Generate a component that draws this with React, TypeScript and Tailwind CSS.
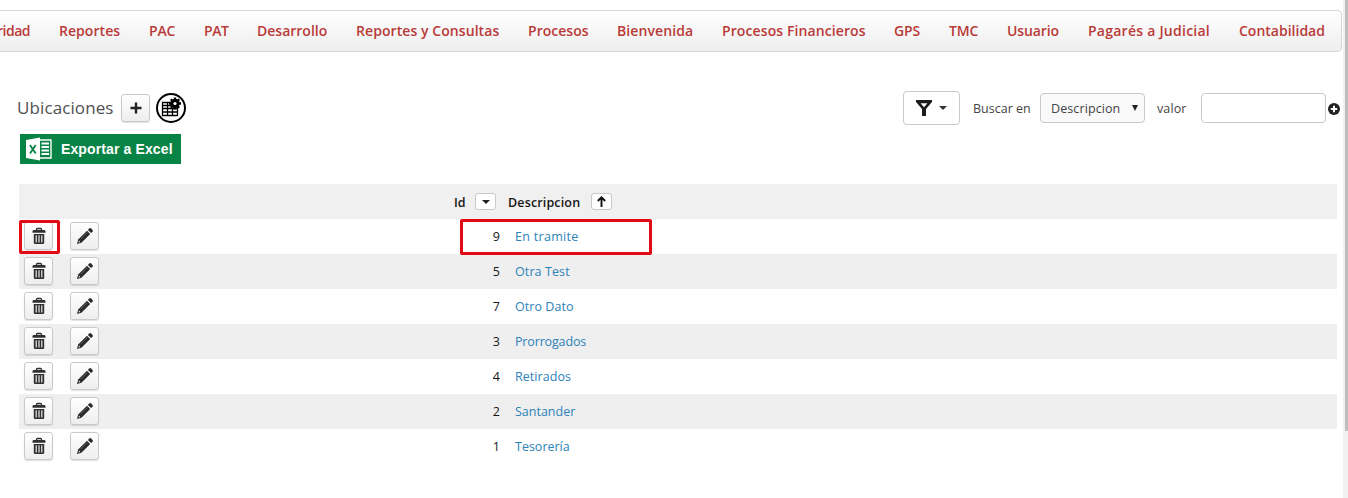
import React from "react";

const navItems = [
  { label: "Seguridad", style: "w-[69px] justify-end tracking-[-0.5px]" },
  { label: "Reportes", style: "w-[61px] tracking-[0.05px]" },
  { label: "PAC", style: "w-[26px] tracking-[-0.2px]" },
  { label: "PAT", style: "w-[24px] tracking-[-0.4px]" },
  { label: "Desarrollo", style: "w-[70px] tracking-[0px]" },
  { label: "Reportes y Consultas", style: "w-[143px] tracking-[0.07px]" },
  { label: "Procesos", style: "w-[60px] tracking-[0.02px]" },
  { label: "Bienvenida", style: "w-[76px] tracking-[0.1px]" },
  { label: "Procesos Financieros", style: "w-[143px] tracking-[0.1px]" },
  { label: "GPS", style: "w-[26px] tracking-[-0.1px]" },
  { label: "TMC", style: "w-[29px] tracking-[-0.1px]" },
  { label: "Usuario", style: "w-[52px] tracking-[-0.1px]" },
  { label: "Pagarés a Judicial", style: "w-[122px] tracking-[0.25px]" },
  { label: "Contabilidad", style: "w-[86px] tracking-[0px]" },
];

const rows = [
  { id: 9, name: "En tramite", tracking: "tracking-[0.3px]", marked: true },
  { id: 5, name: "Otra Test", tracking: "tracking-[0.1px]" },
  { id: 7, name: "Otro Dato", tracking: "tracking-[0.05px]" },
  { id: 3, name: "Prorrogados", tracking: "tracking-[-0.15px]" },
  { id: 4, name: "Retirados", tracking: "tracking-[0.05px]" },
  { id: 2, name: "Santander", tracking: "tracking-[0px]" },
  { id: 1, name: "Tesorería", tracking: "tracking-[0px]" },
];

function TrashIcon() {
  return (
    <svg width="14" height="18" viewBox="0 0 14 18" fill="none">
      <path d="M4.5 3.2V2.4q0-.9.9-.9h3.2q.9 0 .9.9v.8" stroke="#303030" strokeWidth="1.3" />
      <path d="M.5 5.8V4.4Q.5 3 2 3h10q1.5 0 1.5 1.4v1.4z" fill="#303030" />
      <path d="M1.8 7h10.4v8.7q0 1.3-1.3 1.3H3.1q-1.3 0-1.3-1.3z" fill="#303030" />
      <path d="M4.2 8.2v7.3M7 8.2v7.3M9.8 8.2v7.3" stroke="#e8e8e8" strokeWidth="1.2" />
    </svg>
  );
}

function PencilIcon() {
  return (
    <svg width="18" height="18" viewBox="0 0 18 18" fill="#292929">
      <path d="M1 17l1.2-4.4 8.8-8.8 3.2 3.2-8.8 8.8z" />
      <path d="M11.9 2.9l1.4-1.4a1.3 1.3 0 0 1 1.8 0l1.4 1.4a1.3 1.3 0 0 1 0 1.8l-1.4 1.4z" />
      <path d="M3 13.6l1.4 1.4-1.8.6z" fill="#f6f6f6" />
      <path d="M4.5 12.3l6.9-6.9" stroke="#777" strokeWidth=".7" />
    </svg>
  );
}

function IconButton({ children }: { children: React.ReactNode }) {
  return (
    <button className="flex h-[28px] w-[29px] shrink-0 items-center justify-center rounded-[3px] border border-[#c9c9c9] bg-linear-to-b from-white to-[#eeeeee] shadow-[0_1px_1px_rgba(0,0,0,0.12)]">
      {children}
    </button>
  );
}

function TableSettingsIcon() {
  return (
    <svg className="ml-[5px]" width="32" height="32" viewBox="0 0 32 32">
      <circle cx="16" cy="16" r="14" fill="white" stroke="black" strokeWidth="2" />
      <path d="M7.5 10.5h15v13h-15zM7.5 13.5h15M7.5 16.5h15M7.5 20h15M12.5 10.5v13M17.5 16v7.5" fill="none" stroke="black" strokeWidth="1.3" />
      <circle cx="20" cy="11.5" r="4.7" fill="black" />
      <path d="M20 5.5v12M14 11.5h12M15.8 7.3l8.4 8.4M24.2 7.3l-8.4 8.4" stroke="black" strokeWidth="2.3" />
      <circle cx="20" cy="11.5" r="1.6" fill="white" />
    </svg>
  );
}

function ExcelIcon() {
  return (
    <svg width="27" height="24" viewBox="0 0 27 24">
      <path d="M13 3h12v18H13z" fill="#078345" stroke="white" strokeWidth="1.4" />
      <path d="M15.5 6.5h7.5M15.5 10h7.5M15.5 13.5h7.5M15.5 17h7.5" stroke="white" strokeWidth="2" />
      <path d="M0 3L14 .5v23L0 21z" fill="white" />
      <path d="M4 8l5.7 8.5M9.7 8L4 16.5" stroke="#078345" strokeWidth="1.8" />
    </svg>
  );
}

export default function App() {
  return (
    <div className="flex h-[498px] w-[1348px] overflow-hidden bg-white font-['Open_Sans','Noto_Sans',sans-serif] text-[12.5px] text-[#444]">
      <div className="flex w-[1343px] shrink-0 flex-col pt-[10px]">
        <nav className="flex h-[42px] w-[1342px] items-center justify-end gap-[29px] overflow-hidden rounded-r-[5px] border border-l-0 border-[#d5d5d5] bg-linear-to-b from-white to-[#eeeeee] pb-[2px] pr-[16px] text-[14px] font-semibold text-[#b93b39]">
          {navItems.map((item) => (
            <a key={item.label} className={"flex shrink-0 whitespace-nowrap " + item.style}>
              {item.label}
            </a>
          ))}
        </nav>

        <header className="mt-[39px] flex h-[34px] items-center pl-[17px]">
          <h1 className="w-[104px] whitespace-nowrap text-[17px] font-medium tracking-[0.1px] text-[#505050]">Ubicaciones</h1>
          <IconButton>
            <svg width="12" height="12" viewBox="0 0 12 12">
              <path d="M6 .5v11M.5 6h11" stroke="#222" strokeWidth="2.4" />
            </svg>
          </IconButton>
          <TableSettingsIcon />

          <div className="ml-auto flex items-center">
            <button className="flex h-[34px] w-[57px] items-center justify-center gap-[7px] rounded-[4px] border border-[#c9c9c9]">
              <svg width="16" height="16" viewBox="0 0 16 16">
                <path fillRule="evenodd" d="M0 0h16v2L10 9v7H6V9L0 2zM4.6 3.2L8 7.2l3.4-4z" fill="#1d1d1d" />
              </svg>
              <svg width="8" height="4" viewBox="0 0 8 4">
                <path d="M0 0h8L4 4z" fill="#333" />
              </svg>
            </button>
            <span className="ml-[13px] w-[67px] whitespace-nowrap pt-[2px]">Buscar en</span>
            <button className="flex h-[30px] w-[105px] items-center justify-between rounded-[4px] border border-[#c9c9c9] bg-[#f9f9f9] pl-[10px] pr-[6px]">
              <span className="pt-[2px] tracking-[0.1px]">Descripcion</span>
              <svg width="6" height="6" viewBox="0 0 6 6">
                <path d="M0 0h6L3 6z" fill="#222" />
              </svg>
            </button>
            <span className="ml-[12px] w-[44px] pt-[2px] tracking-[0.1px]">valor</span>
            <input aria-label="valor" className="h-[30px] w-[125px] rounded-[4px] border border-[#c9c9c9] bg-white" />
            <svg className="ml-[2px] mr-[3px] mt-[2px]" width="12" height="12" viewBox="0 0 12 12">
              <circle cx="6" cy="6" r="6" fill="#222" />
              <path d="M6 2.8v6.4M2.8 6h6.4" stroke="white" strokeWidth="2" />
            </svg>
          </div>
        </header>

        <button className="ml-[20px] mt-[9px] flex h-[30px] w-[161px] items-center bg-[#078345] pl-[6px] font-['Liberation_Sans',sans-serif] text-[14px] font-bold text-white">
          <ExcelIcon />
          <span className="ml-[8px] whitespace-nowrap pt-[1px] tracking-[0.12px]">Exportar a Excel</span>
        </button>

        <section className="ml-[19px] mt-[20px] w-[1318px]">
          <div className="flex h-[35px] items-center bg-[#f0f0f0] font-semibold text-[#161616]">
            <span className="ml-[435px] w-[21px] pt-[3px]">Id</span>
            <button className="flex h-[17px] w-[21px] items-center justify-center rounded-[3px] border border-[#c9c9c9] bg-white">
              <svg width="8" height="4" viewBox="0 0 8 4"><path d="M0 0h8L4 4z" fill="#222" /></svg>
            </button>
            <span className="ml-[12px] w-[83px] whitespace-nowrap pt-[3px] tracking-[0.15px]">Descripcion</span>
            <button className="flex h-[17px] w-[21px] items-center justify-center rounded-[3px] border border-[#c9c9c9] bg-white">
              <svg width="9" height="11" viewBox="0 0 9 11"><path d="M4.5 11V1.5M.8 5l3.7-3.7L8.2 5" fill="none" stroke="#111" strokeWidth="1.9" /></svg>
            </button>
          </div>
          {rows.map((row) => (
            <div key={row.id} className={"relative flex h-[35px] items-center even:bg-white odd:bg-[#efefef] " + (row.marked ? "z-10" : "")}>
              <div className="mb-[2px] ml-[5px] flex gap-[17px]">
                <IconButton><TrashIcon /></IconButton>
                <IconButton><PencilIcon /></IconButton>
              </div>
              <span className="ml-[391px] w-[10px] pt-[2px] text-right text-[#161616]">{row.id}</span>
              <a className={"ml-[15px] whitespace-nowrap pt-[2px] text-[#2c82b9] " + row.tracking}>{row.name}</a>
              {row.marked && (
                <>
                  <span className="absolute left-0 top-[1px] h-[34px] w-[41px] rounded-[2px] border-3 border-[#e30b13]" />
                  <span className="absolute left-[441px] top-0 h-[36px] w-[192px] rounded-[2px] border-3 border-[#e30b13]" />
                </>
              )}
            </div>
          ))}
        </section>
      </div>
      <aside className="flex w-[5px] justify-end bg-[#f0f0f0]">
        <div className="h-[431px] w-[3px] bg-[#bebebe]" />
      </aside>
    </div>
  );
}
